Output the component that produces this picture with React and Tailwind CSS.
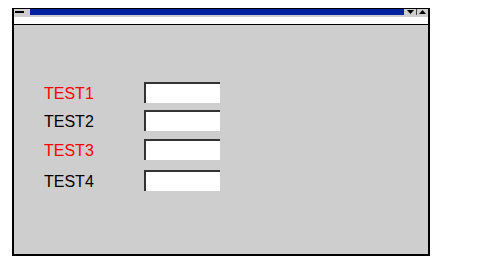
export default function App() {
  const rows = [
    { label: 'TEST1', red: true, mt: 'mt-[57px]' },
    { label: 'TEST2', red: false, mt: 'mt-[7px]' },
    { label: 'TEST3', red: true, mt: 'mt-[8px]' },
    { label: 'TEST4', red: false, mt: 'mt-[10px]' },
  ];

  return (
    <div className="h-[263px] w-[478px] bg-white font-['Liberation_Sans',Arial,sans-serif]">
      <div className="ml-[12px] pt-[8px]">
        <div className="flex h-[248px] w-[418px] flex-col border-x-2 border-b-2 border-t border-black bg-[#cecece]">
          {/* title bar */}
          <div className="flex h-[6px] items-stretch">
            <div className="flex w-[16px] items-center bg-[#cecece] pl-[1px]">
              <div className="h-[2px] w-[9px] bg-black" />
            </div>
            <div className="flex-1 bg-[#0022a0]" />
            <div className="flex w-[12px] items-center justify-center bg-[#cecece]">
              <svg width="7" height="4" viewBox="0 0 7 4">
                <path d="M0 0h7L3.5 4z" fill="#000" />
              </svg>
            </div>
            <div className="w-[1px] bg-[#444]" />
            <div className="flex w-[11px] items-center justify-center bg-[#cecece]">
              <svg width="7" height="4" viewBox="0 0 7 4">
                <path d="M0 4h7L3.5 0z" fill="#000" />
              </svg>
            </div>
          </div>
          <div className="h-[2px] bg-[#cecece]" />
          {/* menu bar */}
          <div className="h-[8px] border-b border-black bg-white" />
          {/* body */}
          <div className="flex flex-col">
            {rows.map((r) => (
              <div key={r.label} className={`flex h-[21px] items-center ${r.mt}`}>
                <div
                  className={`ml-[30px] w-[100px] pt-[3px] text-[16px] leading-[18px] ${
                    r.red ? 'text-[#ff0000]' : 'text-black'
                  }`}
                >
                  {r.label}
                </div>
                <div className="h-[21px] w-[76px] border-l-2 border-t-2 border-[#333] bg-white" />
              </div>
            ))}
          </div>
        </div>
      </div>
    </div>
  );
}
